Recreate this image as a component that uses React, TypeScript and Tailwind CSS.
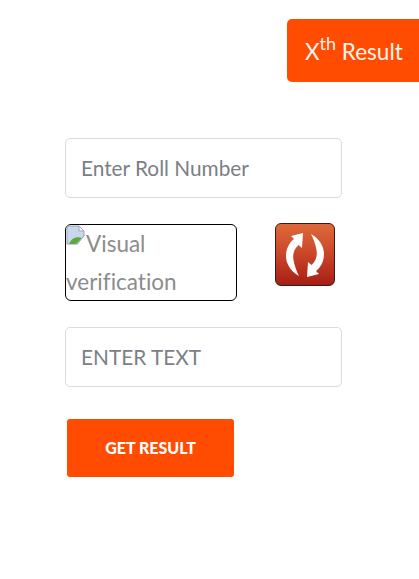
export default function App() {
  const font = "font-['Lato','Noto_Sans',sans-serif] [font-variant-ligatures:none]";
  const arc = "M18 3L17 18L13.5 15C9 19 7.5 24 8.5 30C9.5 36 12 42 14 46C5 41 1 33 1 26C1 19 4 13 9 9L6 6Z";
  return (
    <div className={`w-[419px] h-[579px] bg-white overflow-hidden ${font}`}>
      <div className="flex justify-end pt-[19px]">
        <div className="w-[132px] h-[63px] bg-[#ff4c00] rounded-l-[5px] flex items-center pl-[18px] text-[#fff3ea] text-[22.5px] leading-none whitespace-nowrap">
          <span className="relative -top-[2px]">X<sup className="text-[18px] leading-none relative -top-[1px] align-super">th</sup> Result</span>
        </div>
      </div>
      <div className="pl-[65px] pt-[56px] flex flex-col">
        <div className="w-[277px] h-[60px] border border-[#dcdcdc] rounded-[5px] flex items-center pl-[15px] text-[20.8px] text-[#7b8085]">
          Enter Roll Number
        </div>
        <div className="flex items-start mt-[25px] h-[78px]">
          <div className="w-[172px] h-[77px] mt-[1px] border border-black rounded-[6px] overflow-hidden text-[22.5px] leading-[38px] text-[#8c8c8c]">
            <svg className="inline-block align-top" width="20" height="20" viewBox="0 0 20 20">
              <path d="M1 1h12l5 5v13H1z" fill="#c9d7ee" stroke="#9aa6b8" strokeWidth="1" />
              <path d="M13 1v5h5z" fill="#fff" stroke="#9aa6b8" strokeWidth="1" />
              <path d="M3 19C5 14 10 11 16 13L10 19Z" fill="#5fa83c" />
              <path d="M11 20L20 9V20Z" fill="#fff" />
              <path d="M11 19.5L19 9.5" stroke="#9aa6b8" strokeWidth="1" />
            </svg>
            Visual verification
          </div>
          <div className="ml-[38px] w-[60px] h-[63px] rounded-[6px] border border-[#3a1a14] bg-gradient-to-b from-[#e0683a] via-[#c8452a] to-[#a81c14] flex items-center justify-center">
            <svg width="40" height="50" viewBox="0 0 40 50">
              <path d={arc} fill="#fff" />
              <path d={arc} fill="#fff" transform="rotate(180 20 25)" />
            </svg>
          </div>
        </div>
        <div className="mt-[26px] w-[277px] h-[60px] border border-[#dcdcdc] rounded-[5px] flex items-center pl-[15px] text-[20.8px] text-[#7b8085]">
          ENTER TEXT
        </div>
        <div className="mt-[32px] ml-[2px] w-[167px] h-[58px] bg-[#ff4c00] rounded-[3px] flex items-center justify-center text-white text-[16px] font-black">
          GET RESULT
        </div>
      </div>
    </div>
  );
}
